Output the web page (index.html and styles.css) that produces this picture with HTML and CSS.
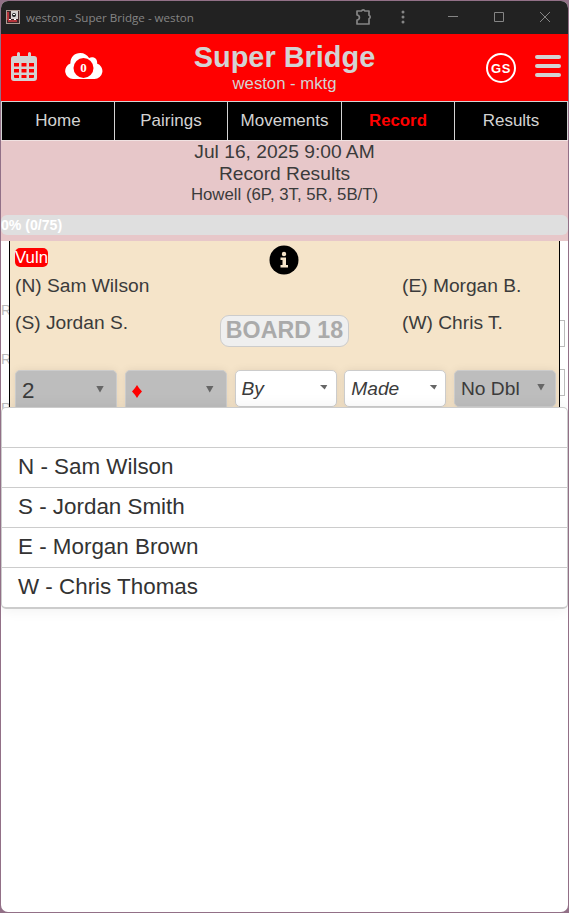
FILE: index.html
```html
<!DOCTYPE html>
<html lang="en">
<head>
<meta charset="utf-8">
<title>weston - Super Bridge - weston</title>
<link rel="stylesheet" href="styles.css">
</head>
<body>
<div class="window">
  <div class="titlebar">
    <svg class="favicon" width="14" height="14" viewBox="0 0 14 14"><path fill="#ad9b92" d="M0 0h14v14H0z"/><path fill="#402629" d="M1 1h12v12H1z"/><path fill="#d8d2d0" d="M5 1h7v8H5z"/><path fill="#b5343b" d="M1 2h2v8H1zM2 10h9v2H2z"/><circle cx="8" cy="5" r="2" fill="#222"/><path fill="#fff" d="M7 4h2v1H7zM3 9h2v1H3zM8 9h2v1H8z"/></svg>
    <span class="wintitle">weston - Super Bridge - weston</span>
    <svg class="ext" width="18" height="18" viewBox="0 0 18 18" fill="none" stroke="#858585" stroke-width="1.7" stroke-linejoin="round"><path d="M2 3h4.500a1.800 1.800 0 0 1 3.400 0H14v4.300a1.800 1.800 0 0 1 0 3.400V16H2v-4q2.400-.3 2.400-2.500T2 7z"/></svg>
    <svg class="dots" width="4" height="14" viewBox="0 0 4 14" fill="#858585"><circle cx="2" cy="2" r="1.5"/><circle cx="2" cy="7" r="1.5"/><circle cx="2" cy="12" r="1.5"/></svg>
    <svg class="min" width="10" height="10" viewBox="0 0 10 10" stroke="#858585"><path d="M0 4.500h10"/></svg>
    <svg class="max" width="10" height="10" viewBox="0 0 10 10" fill="none" stroke="#858585"><path d="M.5.5h9v9h-9z"/></svg>
    <svg class="close" width="10" height="10" viewBox="0 0 10 10" stroke="#858585"><path d="M0 0l10 10M10 0L0 10"/></svg>
  </div>
  <header class="header">
    <svg class="calendar" width="26" height="30" viewBox="0 0 26 30"><path fill="#d3d3d3" d="M7.500 0Q9 0 9 1.500V4h8V1.500Q17 0 18.500 0T20 1.500V4h3q3 0 3 3v19q0 3-3 3H3q-3 0-3-3V7q0-3 3-3h3V1.500Q6 0 7.500 0z"/><path fill="#f00" d="M3 11h5v3.500H3zM10.500 11h5v3.500h-5zM18 11h5v3.500h-5zM3 17h5v3.500H3zM10.500 17h5v3.500h-5zM18 17h5v3.500h-5zM3 23h5v3H4q-1 0-1-1zM10.500 23h5v3h-5zM18 23h5v2q0 1-1 1h-4z"/></svg>
    <div class="cloud">
      <svg width="38" height="27" viewBox="0 0 38 27"><path fill="#fff" d="M8 26a8 8 0 0 1-2.600-15.500C5.200 4.300 9.500 0 15.200 0c4 0 7.200 2 8.900 5 4-2.100 9 .8 7.900 5.600A7.900 7.900 0 0 1 29.500 26z"/><circle cx="18.500" cy="15" r="10" fill="#f00"/></svg>
      <span class="count">0</span>
    </div>
    <div class="brand"><h1>Super Bridge</h1><div class="club">weston - mktg</div></div>
    <div class="avatar">GS</div>
    <div class="menu"><i></i><i></i><i></i></div>
  </header>
  <nav class="nav"><a>Home</a><a>Pairings</a><a>Movements</a><a class="active">Record</a><a>Results</a></nav>
  <section class="session">
    <div class="big">Jul 16, 2025 9:00 AM</div>
    <div class="big">Record Results</div>
    <div class="movement">Howell (6P, 3T, 5R, 5B/T)</div>
    <div class="progress">0% (0/75)</div>
  </section>
  <main class="content">
    <div class="under-left"><span>R</span><span>R</span><span>R</span></div>
    <div class="card">
      <div class="players">
        <div class="side"><span class="vuln">Vuln</span><span class="player">(N) Sam Wilson</span><span class="player">(S) Jordan S.</span></div>
        <div class="middle">
          <svg class="info" width="30" height="30" viewBox="0 0 30 30"><circle cx="15" cy="15" r="14.500"/><g fill="#f5e4c9"><circle cx="15" cy="9" r="2.200"/><path d="M11.500 12.500h5.500v7.500h2v2.500h-7.500V20h2v-5h-2z"/></g></svg>
          <div class="board">BOARD 18</div>
        </div>
        <div class="side east"><span class="player">(E) Morgan B.</span><span class="player">(W) Chris T.</span></div>
      </div>
      <div class="selects">
        <div class="select set tall"><span class="level">2</span><b></b></div>
        <div class="select set tall"><svg class="diamond" width="10" height="13" viewBox="0 0 10 13"><path fill="#f00" d="M5 0q2 3.500 5 6.500-3 3-5 6.500-2-3.500-5-6.500 3-3 5-6.500z"/></svg><b></b></div>
        <div class="select"><em>By</em><b></b></div>
        <div class="select"><em>Made</em><b></b></div>
        <div class="select set"><span>No Dbl</span><b></b></div>
      </div>
    </div>
    <div class="under-right"><i></i><i></i></div>
    <ul class="popup"><li></li><li>N - Sam Wilson</li><li>S - Jordan Smith</li><li>E - Morgan Brown</li><li>W - Chris Thomas</li></ul>
  </main>
</div>
</body>
</html>
```

FILE: styles.css
```css
* { box-sizing: border-box; }
body {
  margin: 0;
  padding: 1px;
  height: 913px;
  overflow: hidden;
  background: #927087;
  font-family: "Liberation Sans", Arial, sans-serif;
  color: #3b3b3b;
}
svg { display: block; flex: none; }
.window {
  width: 567px;
  height: 911px;
  overflow: hidden;
  border-radius: 7px;
  background: #fff;
}
.titlebar {
  display: flex;
  align-items: center;
  height: 33px;
  padding: 0 18px 2px 5px;
  background: #222;
}
.wintitle {
  width: 190px;
  margin: 0 auto 0 6px;
  padding-top: 2px;
  font: 11.600px/16px "Open Sans", sans-serif;
  color: #858585;
  white-space: nowrap;
}
.ext { margin-right: 28px; }
.dots { margin-right: 43px; }
.min { margin-right: 36px; }
.max { margin-right: 36px; }
.header {
  display: grid;
  grid-template-columns: 55px 84px 271px 96px 1fr;
  height: 67px;
  padding-left: 9px;
  background: #f00;
  color: #d3d3d3;
}
.calendar { margin: 18px 0 0 1px; }
.cloud { display: grid; width: 38px; margin-top: 19px; }
.cloud > * { grid-area: 1 / 1; }
.count {
  width: 37px;
  padding-top: 7px;
  text-align: center;
  font: bold 13px/16px "Liberation Serif", serif;
  color: #fff;
}
.brand { text-align: center; }
h1 { margin: 5px 0 0; font-size: 28.900px; line-height: 36px; white-space: nowrap; }
.club { font-size: 16.700px; line-height: 19px; margin-top: -1px; }
.avatar {
  justify-self: end;
  width: 30px;
  height: 30px;
  margin-top: 19px;
  border: 2px solid #fff;
  border-radius: 50%;
  font-weight: bold;
  font-size: 13px;
  line-height: 27px;
  letter-spacing: .6px;
  text-align: center;
  color: #fff;
}
.menu { display: flex; flex-direction: column; gap: 5px; margin: 21px 0 0 19px; width: 26px; }
.menu i { height: 4px; border-radius: 2px; background: #d3d3d3; }
.nav {
  display: grid;
  grid-template-columns: 113px 113px 114px 113px 1fr;
  height: 39px;
  border: solid #d3d3d3;
  border-width: 1px 1px 0;
  background: #000;
}
.nav a {
  border-right: 1px solid #d3d3d3;
  font-size: 17px;
  line-height: 37px;
  text-align: center;
  color: #d3d3d3;
}
.nav a:last-child { border: 0; }
.nav .active { font-weight: bold; font-size: 16.800px; color: #f00; }
.session {
  height: 101px;
  border-top: 1px solid #f1e2e2;
  background: #e7c7c9;
  text-align: center;
}
.big { font-size: 19.200px; line-height: 22px; }
.movement { font-size: 16.800px; line-height: 20px; }
.progress {
  height: 20px;
  margin-top: 10px;
  border-radius: 6px;
  background: #dfdfdf;
  color: #fff;
  font-weight: bold;
  font-size: 14.100px;
  line-height: 20px;
  text-align: left;
}
.content { position: relative; display: flex; height: 671px; }
.under-left { width: 8px; padding-top: 60px; overflow: hidden; font-size: 14px; line-height: 19px; color: #bbb; }
.under-left span { display: block; height: 49px; }
.card {
  width: 551px;
  height: 180px;
  padding: 0 3px 0 5px;
  border: solid #000;
  border-width: 0 1px;
  background: #f5e4c9;
}
.players { display: grid; grid-template-columns: 205px 129px 1fr; height: 129px; }
.side { display: flex; flex-direction: column; align-items: flex-start; font-size: 19.200px; }
.vuln {
  height: 19px;
  margin: 7px 0 8px;
  border-radius: 5px;
  background: #f00;
  color: #fff;
  font-size: 16.800px;
  line-height: 19px;
}
.player { height: 37px; line-height: 22px; white-space: nowrap; }
.east { padding: 34px 0 0 53px; }
.middle { display: flex; flex-direction: column; align-items: center; padding-top: 4px; }
.info { margin-right: 1px; }
.board {
  width: 129px;
  height: 32px;
  margin-top: 40px;
  border: 1px solid #ccc;
  border-radius: 9px;
  background: #efefef;
  font-weight: bold;
  font-size: 23.200px;
  line-height: 29px;
  text-align: center;
  white-space: nowrap;
  color: #aaa;
}
.selects { display: grid; grid-template-columns: repeat(5, 102px); column-gap: 7.750px; align-items: start; }
.select {
  display: flex;
  align-items: center;
  justify-content: space-between;
  height: 37px;
  padding: 0 8px 0 6px;
  border: 1px solid #ccc;
  border-radius: 5px;
  background: #fff;
  box-shadow: 0 0 9px rgba(0, 0, 0, .08);
  font-size: 19.200px;
}
.set { padding-right: 10px; background: #bdbdbd; }
.tall { height: 41px; padding-right: 12px; }
.level { font-size: 22.400px; }
.diamond { margin-top: 2px; }
.select b {
  width: 8px;
  height: 7px;
  margin-top: -3px;
  background: #666;
  clip-path: polygon(0 0, 100% 0, 50% 100%);
}
.select em + b { height: 5px; clip-path: polygon(0 0, 100% 0, 65% 100%); }
.under-right { width: 6px; padding-top: 79px; }
.under-right i { display: block; width: 5px; height: 27px; margin-bottom: 22px; border: 1px solid #bbb; border-left: 0; }
.popup {
  position: absolute;
  top: 166px;
  left: 0;
  width: 567px;
  height: 202px;
  margin: 0;
  padding: 0;
  list-style: none;
  border: 1px solid #ccc;
  border-bottom-width: 2px;
  border-radius: 5px;
  background: #fff;
  box-shadow: 0 0 15px rgba(0, 0, 0, .07);
  font-size: 22.400px;
}
.popup li { height: 40px; padding-left: 16px; line-height: 38px; border-bottom: 1px solid #ccc; color: #333; }
.popup li:last-child { border: 0; }
```
